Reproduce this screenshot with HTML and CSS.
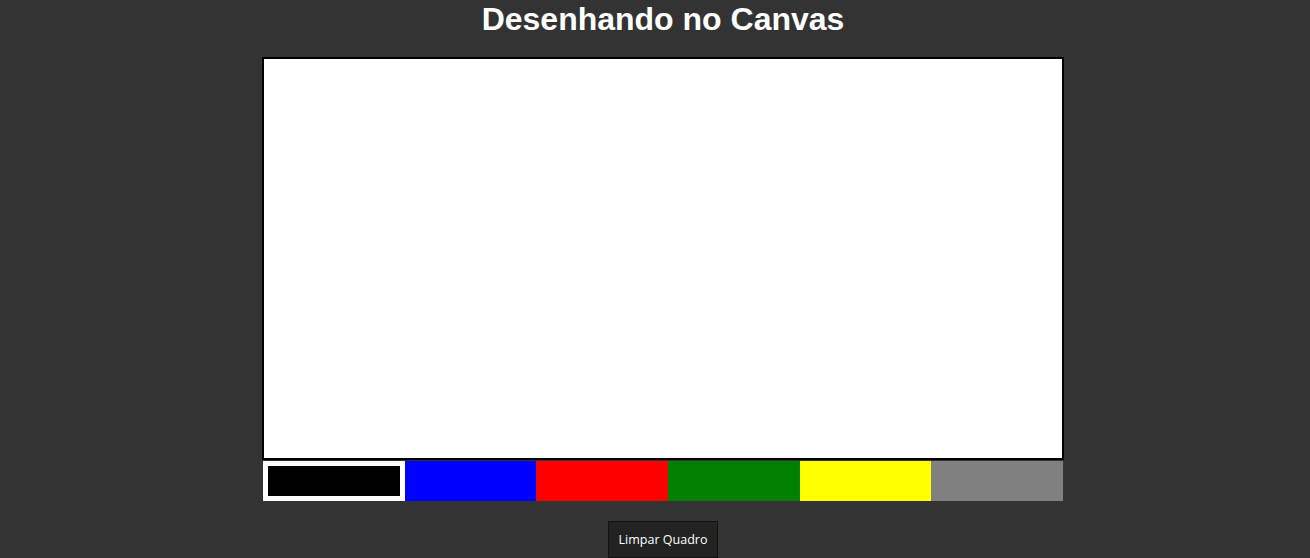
FILE: index.html
```html
<!DOCTYPE html>
<html lang="pt">
<head>
<meta charset="utf-8">
<title>Desenhando no Canvas</title>
<link rel="stylesheet" href="styles.css">
</head>
<body>
  <h1 class="title">Desenhando no Canvas</h1>
  <div class="board"></div>
  <div class="palette">
    <div class="swatch swatch-black selected"></div>
    <div class="swatch swatch-blue"></div>
    <div class="swatch swatch-red"></div>
    <div class="swatch swatch-green"></div>
    <div class="swatch swatch-yellow"></div>
    <div class="swatch swatch-gray"></div>
  </div>
  <button class="clear-btn">Limpar Quadro</button>
</body>
</html>
```

FILE: styles.css
```css
html, body {
  height: 100%;
}

body {
  margin: 0;
  padding: 0 0 0 16px;
  background: #333333;
  color: #ffffff;
  font-family: "Liberation Sans", Arial, sans-serif;
  display: flex;
  flex-direction: column;
  align-items: center;
  overflow: hidden;
}

.title {
  margin: 1px 0 19px;
  font-size: 32px;
  font-weight: bold;
  line-height: 37px;
}

.board {
  width: 798px;
  height: 399px;
  background: #ffffff;
  border: 2px solid #000000;
}

.palette {
  display: flex;
  width: 800px;
  height: 40px;
  margin-top: 1px;
}

.swatch {
  flex: 1;
  box-sizing: border-box;
  height: 40px;
  cursor: pointer;
}

.swatch.selected {
  border: 5px solid #ffffff;
}

.swatch-black { background: #000000; }
.swatch-blue { background: #0000ff; }
.swatch-red { background: #ff0000; }
.swatch-green { background: #008000; }
.swatch-yellow { background: #ffff00; }
.swatch-gray { background: #808080; }

.clear-btn {
  margin-top: 20px;
  padding: 10px;
  background: #222222;
  color: #ffffff;
  border: 1px solid #111111;
  font-family: "Open Sans", "Liberation Sans", Arial, sans-serif;
  font-size: 12.5px;
  font-weight: 500;
  line-height: 15px;
  cursor: pointer;
}
```
